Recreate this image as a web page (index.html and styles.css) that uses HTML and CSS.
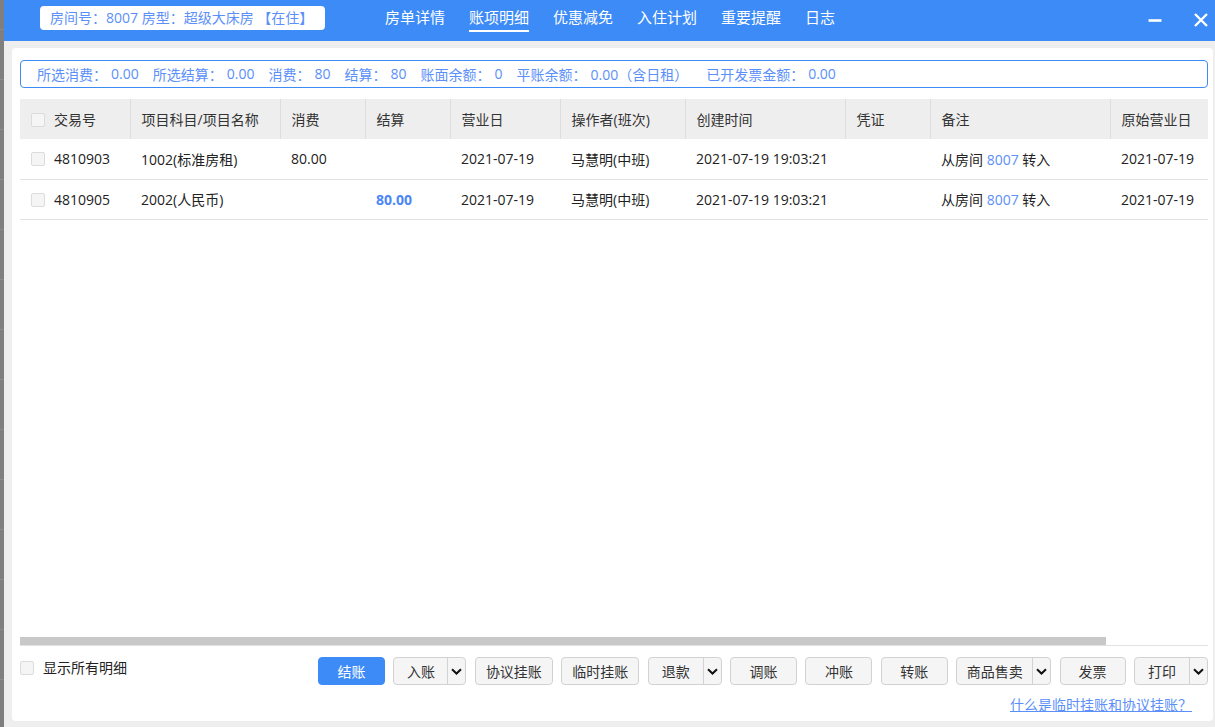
FILE: index.html
```html
<!DOCTYPE html>
<html lang="zh-CN">
<head>
<meta charset="utf-8">
<title>账项明细</title>
<link rel="stylesheet" href="styles.css">
</head>
<body>
<div class="backdrop-strip"></div>
<div class="dialog">
  <header class="titlebar">
    <div class="room-pill">房间号：8007 房型：超级大床房 【在住】</div>
    <nav class="tabs">
      <span class="tab">房单详情</span>
      <span class="tab active">账项明细</span>
      <span class="tab">优惠减免</span>
      <span class="tab">入住计划</span>
      <span class="tab">重要提醒</span>
      <span class="tab">日志</span>
    </nav>
    <div class="win-ctrls">
      <svg class="win-btn" width="16" height="16" viewBox="0 0 16 16"><path d="M1.5 8.5h13" stroke="#fff" stroke-width="2.6" fill="none"/></svg>
      <svg class="win-btn" width="16" height="16" viewBox="0 0 16 16"><path d="M2 2l12 12M14 2L2 14" stroke="#fff" stroke-width="2.4" fill="none"/></svg>
    </div>
  </header>
  <div class="content">
    <div class="panel">
      <div class="summary">
        <span class="sum-item"><span>所选消费：</span><span>0.00</span></span>
        <span class="sum-item"><span>所选结算：</span><span>0.00</span></span>
        <span class="sum-item"><span>消费：</span><span>80</span></span>
        <span class="sum-item"><span>结算：</span><span>80</span></span>
        <span class="sum-item"><span>账面余额：</span><span>0</span></span>
        <span class="sum-item"><span>平账余额：</span><span>0.00（含日租）</span></span>
        <span class="sum-item sum-last"><span>已开发票金额：</span><span>0.00</span></span>
      </div>
      <div class="table-wrap">
        <table class="grid">
          <colgroup>
            <col class="c1"><col class="c2"><col class="c3"><col class="c4"><col class="c5">
            <col class="c6"><col class="c7"><col class="c8"><col class="c9"><col class="c10">
          </colgroup>
          <thead>
            <tr>
              <th class="first"><span class="cb"></span>交易号</th>
              <th>项目科目/项目名称</th>
              <th>消费</th>
              <th>结算</th>
              <th>营业日</th>
              <th>操作者(班次)</th>
              <th>创建时间</th>
              <th>凭证</th>
              <th>备注</th>
              <th>原始营业日</th>
            </tr>
          </thead>
          <tbody>
            <tr>
              <td class="first"><span class="cb"></span>4810903</td>
              <td>1002(标准房租)</td>
              <td>80.00</td>
              <td></td>
              <td>2021-07-19</td>
              <td>马慧明(中班)</td>
              <td>2021-07-19 19:03:21</td>
              <td></td>
              <td>从房间 <span class="room-link">8007</span> 转入</td>
              <td>2021-07-19</td>
            </tr>
            <tr>
              <td class="first"><span class="cb"></span>4810905</td>
              <td>2002(人民币)</td>
              <td></td>
              <td class="amount">80.00</td>
              <td>2021-07-19</td>
              <td>马慧明(中班)</td>
              <td>2021-07-19 19:03:21</td>
              <td></td>
              <td>从房间 <span class="room-link">8007</span> 转入</td>
              <td>2021-07-19</td>
            </tr>
          </tbody>
        </table>
      </div>
      <div class="hscroll"><div class="thumb"></div></div>
      <div class="footer">
        <label class="show-all"><span class="cb"></span>显示所有明细</label>
        <div class="buttons">
          <button class="btn primary w67">结账</button>
          <div class="split w73"><span class="main">入账</span><span class="arrow"><svg width="11" height="7" viewBox="0 0 11 7"><path d="M1 1.2l4.5 4.3 4.5-4.3" stroke="#111" stroke-width="2" fill="none"/></svg></span></div>
          <button class="btn w78">协议挂账</button>
          <button class="btn w78">临时挂账</button>
          <div class="split w74"><span class="main">退款</span><span class="arrow"><svg width="11" height="7" viewBox="0 0 11 7"><path d="M1 1.2l4.5 4.3 4.5-4.3" stroke="#111" stroke-width="2" fill="none"/></svg></span></div>
          <button class="btn w67">调账</button>
          <button class="btn w67">冲账</button>
          <button class="btn w67">转账</button>
          <div class="split w95"><span class="main">商品售卖</span><span class="arrow"><svg width="11" height="7" viewBox="0 0 11 7"><path d="M1 1.2l4.5 4.3 4.5-4.3" stroke="#111" stroke-width="2" fill="none"/></svg></span></div>
          <button class="btn w66">发票</button>
          <div class="split w74"><span class="main">打印</span><span class="arrow"><svg width="11" height="7" viewBox="0 0 11 7"><path d="M1 1.2l4.5 4.3 4.5-4.3" stroke="#111" stroke-width="2" fill="none"/></svg></span></div>
        </div>
      </div>
      <div class="help"><a class="help-link" href="#">什么是临时挂账和协议挂账？</a></div>
    </div>
  </div>
</div>
</body>
</html>
```
FILE: styles.css
```css
* { box-sizing: border-box; }
html, body { margin: 0; padding: 0; }
body {
  display: flex;
  width: 1215px;
  height: 727px;
  overflow: hidden;
  background: #7f7f7f;
  font-family: "Open Sans", "Noto Sans CJK SC", sans-serif;
  font-size: 14px;
  color: #222;
}
.backdrop-strip {
  width: 4px;
  flex: none;
  background: repeating-linear-gradient(to bottom, #7f7f7f 0, #7f7f7f 29px, #8b8b8b 29px, #8b8b8b 30px, #7f7f7f 30px, #7f7f7f 50px);
}
.dialog {
  flex: 1;
  display: flex;
  flex-direction: column;
  background: #eeeeee;
}
.titlebar {
  height: 41px;
  flex: none;
  background: #3d8bf7;
  display: flex;
  align-items: flex-start;
}
.room-pill {
  margin: 6px 0 0 36px;
  width: 285px;
  height: 24px;
  line-height: 24px;
  padding-left: 10px;
  background: #fff;
  border-radius: 4px;
  color: #5b8ff9;
  font-size: 14px;
  white-space: nowrap;
}
.tabs {
  display: flex;
  gap: 24px;
  margin-left: 60px;
  padding-top: 7px;
}
.tab {
  color: #fff;
  font-size: 15px;
  line-height: 20px;
  padding-bottom: 3px;
  border-bottom: 2px solid transparent;
  white-space: nowrap;
}
.tab.active { border-bottom-color: #fff; }
.win-ctrls {
  margin-left: auto;
  margin-right: 6px;
  padding-top: 12px;
  display: flex;
  gap: 30px;
}
.win-btn { display: block; }

.content {
  flex: 1;
  display: flex;
  padding: 7px 2px 6px 8px;
  min-height: 0;
}
.panel {
  flex: 1;
  background: #fff;
  border-radius: 4px;
  padding: 12px 5px 6px 8px;
  display: flex;
  flex-direction: column;
  min-height: 0;
}
.summary {
  height: 28px;
  flex: none;
  border: 1px solid #3d8bf7;
  border-radius: 4px;
  padding-left: 16px;
  display: flex;
  align-items: center;
  gap: 14px;
  color: #5b8ff9;
  font-size: 14px;
  white-space: nowrap;
}
.sum-item { display: flex; gap: 4px; }
.sum-last { margin-left: 4px; }

.table-wrap {
  flex: 1;
  margin-top: 11px;
  min-height: 0;
}
.grid {
  width: 1188px;
  border-collapse: collapse;
  table-layout: fixed;
}
.c1 { width: 110px; } .c2 { width: 150px; } .c3 { width: 85px; } .c4 { width: 85px; }
.c5 { width: 110px; } .c6 { width: 125px; } .c7 { width: 160px; } .c8 { width: 85px; }
.c9 { width: 180px; } .c10 { width: 98px; }
.grid th {
  height: 40px;
  background: #eeeeee;
  font-weight: normal;
  text-align: left;
  color: #333;
  padding: 0 0 0 11px;
  border-left: 1px solid #dddddd;
  white-space: nowrap;
}
.grid th.first { border-left: none; }
.grid td {
  height: 40px;
  padding: 0 0 0 11px;
  border-bottom: 1px solid #e2e2e2;
  color: #222;
  white-space: nowrap;
}
.grid .first { padding-left: 11px; }
.cb {
  display: inline-block;
  width: 14px;
  height: 14px;
  border: 1px solid #dcdcdc;
  background: #f5f5f5;
  border-radius: 2px;
  vertical-align: -2px;
  margin-right: 9px;
}
.grid td.amount { color: #4a86f7; font-weight: bold; }
.room-link { color: #5b8ff9; }

.hscroll {
  flex: none;
  height: 9px;
  border-bottom: 1px solid #e2e2e2;
}
.thumb {
  width: 1086px;
  height: 8px;
  background: #c8c8c8;
}

.footer {
  flex: none;
  margin-top: 11px;
  height: 28px;
  display: flex;
  align-items: flex-start;
}
.show-all {
  line-height: 22px;
  color: #222;
  display: flex;
  align-items: center;
  white-space: nowrap;
}
.buttons {
  margin-left: auto;
  display: flex;
  gap: 8.4px;
}
.btn, .split {
  height: 28px;
  border: 1px solid #d2d2d2;
  border-radius: 4px;
  background: #f5f5f5;
  color: #333;
  font-family: inherit;
  font-size: 14px;
  padding: 0;
}
.btn.primary {
  background: #3d8bf7;
  border-color: #3d8bf7;
  color: #fff;
}
.split { display: flex; }
.split .main {
  flex: 1;
  display: flex;
  align-items: center;
  justify-content: center;
}
.split .arrow {
  width: 18px;
  border-left: 1px solid #d2d2d2;
  display: flex;
  align-items: center;
  justify-content: center;
}
.w66 { width: 66px; } .w67 { width: 67px; } .w73 { width: 73px; }
.w74 { width: 74px; } .w78 { width: 78px; } .w95 { width: 95px; }

.help {
  flex: none;
  margin-top: 10px;
  height: 20px;
  line-height: 20px;
  text-align: right;
  padding-right: 16px;
}
.help-link {
  color: #5b8ff9;
  text-decoration: underline;
  font-size: 14px;
}
```
